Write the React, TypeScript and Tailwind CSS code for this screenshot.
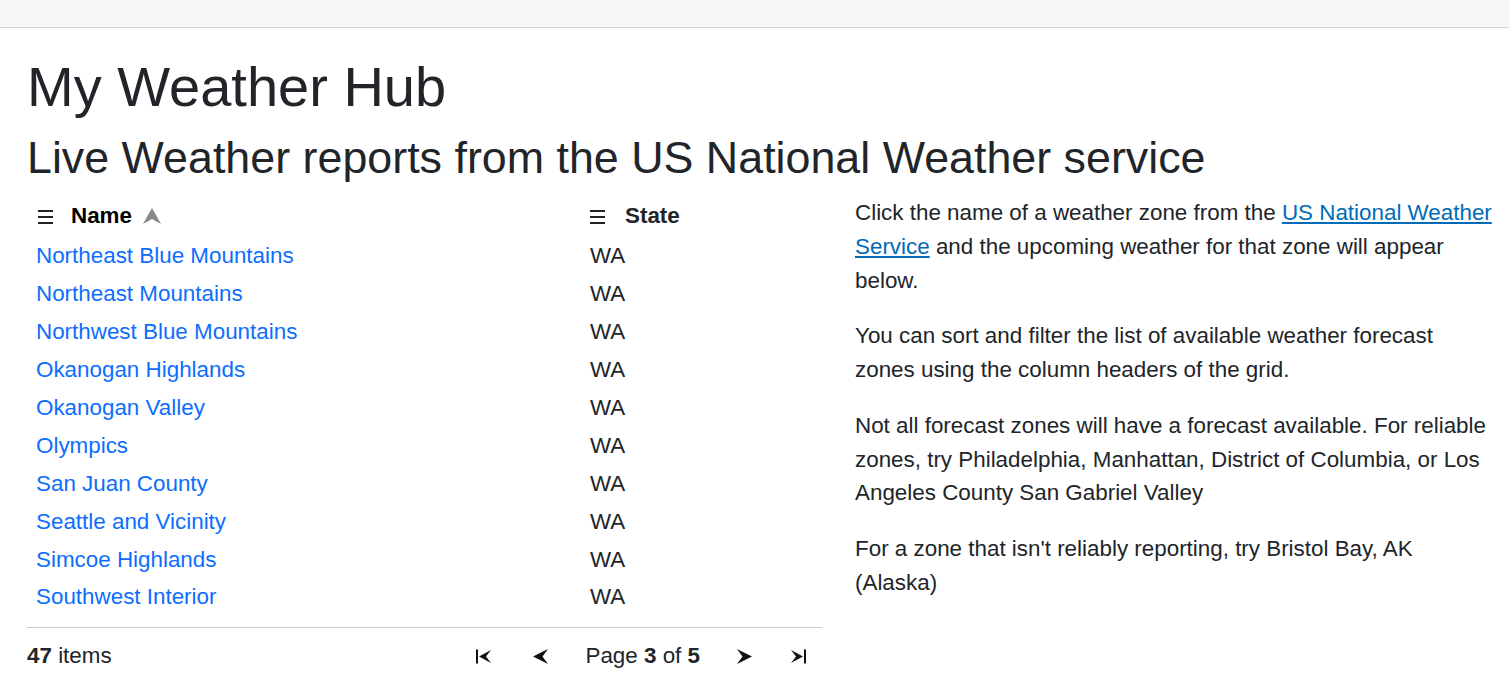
import React from "react";

const zones = [
  "Northeast Blue Mountains",
  "Northeast Mountains",
  "Northwest Blue Mountains",
  "Okanogan Highlands",
  "Okanogan Valley",
  "Olympics",
  "San Juan County",
  "Seattle and Vicinity",
  "Simcoe Highlands",
  "Southwest Interior",
];

const Hamburger = () => (
  <svg width="15" height="16" viewBox="0 0 15 16" className="shrink-0">
    <rect x="0" y="2" width="15" height="2" fill="#222" />
    <rect x="0" y="8" width="15" height="2" fill="#222" />
    <rect x="0" y="14" width="15" height="2" fill="#222" />
  </svg>
);

const SortUp = () => (
  <svg width="18" height="16" viewBox="0 0 18 16" className="shrink-0">
    <polygon points="9,0 18,16 9,11 0,16" fill="#888" />
  </svg>
);

const Arrow = ({ dir, bar }: { dir: "left" | "right"; bar?: boolean }) => (
  <svg width="17" height="17" viewBox="0 0 17 17" className="shrink-0">
    {dir === "left" ? (
      <>
        {bar && <rect x="1" y="1.5" width="2" height="14" fill="#111" />}
        <polygon points={bar ? "4,8.5 16,2 11,8.5 16,15" : "1,8.5 16,1 10.5,8.5 16,16"} fill="#111" />
      </>
    ) : (
      <>
        {bar && <rect x="14" y="1.5" width="2" height="14" fill="#111" />}
        <polygon points={bar ? "13,8.5 1,2 6,8.5 1,15" : "16,8.5 1,1 6.5,8.5 1,16"} fill="#111" />
      </>
    )}
  </svg>
);

export default function App() {
  return (
    <div className="min-h-screen bg-white text-[#212529] font-['Liberation_Sans',Arial,sans-serif]">
      <div className="h-[28px] bg-[#f7f7f7] border-b border-[#d6d6d6]" />

      <main className="pl-[27px] pr-[12px] pt-[25px]">
        <h1 className="text-[56px] leading-[1.2] mb-[11.2px]">My Weather Hub</h1>
        <h2 className="text-[44.8px] leading-[1.2] mb-[11.2px]">
          Live Weather reports from the US National Weather service
        </h2>

        <div className="flex text-[22.4px] leading-[33.6px]">
          <div className="w-[795px] shrink-0">
            <div className="flex h-[41px] pb-[2px] items-center font-bold">
              <div className="w-[554px] flex items-center pl-[11px]">
                <Hamburger />
                <span className="ml-[18px] text-black">Name</span>
                <span className="ml-[11px]">
                  <SortUp />
                </span>
              </div>
              <div className="flex items-center pl-[9px]">
                <Hamburger />
                <span className="ml-[20px]">State</span>
              </div>
            </div>

            {zones.map((z) => (
              <div key={z} className="flex h-[37.9px] items-center">
                <div className="w-[554px] pl-[9px]">
                  <a href="#" className="text-[#0d6efd]">
                    {z}
                  </a>
                </div>
                <div className="pl-[9px]">WA</div>
              </div>
            ))}

            <div className="mt-[11px] border-t border-[#cccccc] flex items-center justify-between pt-[11px] pr-[15px]">
              <div>
                <b>47</b> items
              </div>
              <div className="flex items-center">
                <button className="flex"><Arrow dir="left" bar /></button>
                <button className="flex ml-[40px]"><Arrow dir="left" /></button>
                <span className="ml-[36px]">
                  Page <b>3</b> of <b>5</b>
                </span>
                <button className="flex ml-[36px]"><Arrow dir="right" /></button>
                <button className="flex ml-[37px]"><Arrow dir="right" bar /></button>
              </div>
            </div>
          </div>

          <div className="ml-[33px] w-[642px] shrink-0">
            <p className="mb-[22.4px]">
              Click the name of a weather zone from the{" "}
              <a href="#" className="text-[#006bb7] underline">
                US National Weather Service
              </a>{" "}
              and the upcoming weather for that zone will appear below.
            </p>
            <p className="mb-[22.4px]">
              You can sort and filter the list of available weather forecast
              <br />
              zones using the column headers of the grid.
            </p>
            <p className="mb-[22.4px]">
              Not all forecast zones will have a forecast available. For reliable zones, try Philadelphia, Manhattan,
              District of Columbia, or Los Angeles County San Gabriel Valley
            </p>
            <p className="mb-[22.4px]">For a zone that isn't reliably reporting, try Bristol Bay, AK (Alaska)</p>
          </div>
        </div>
      </main>
    </div>
  );
}
